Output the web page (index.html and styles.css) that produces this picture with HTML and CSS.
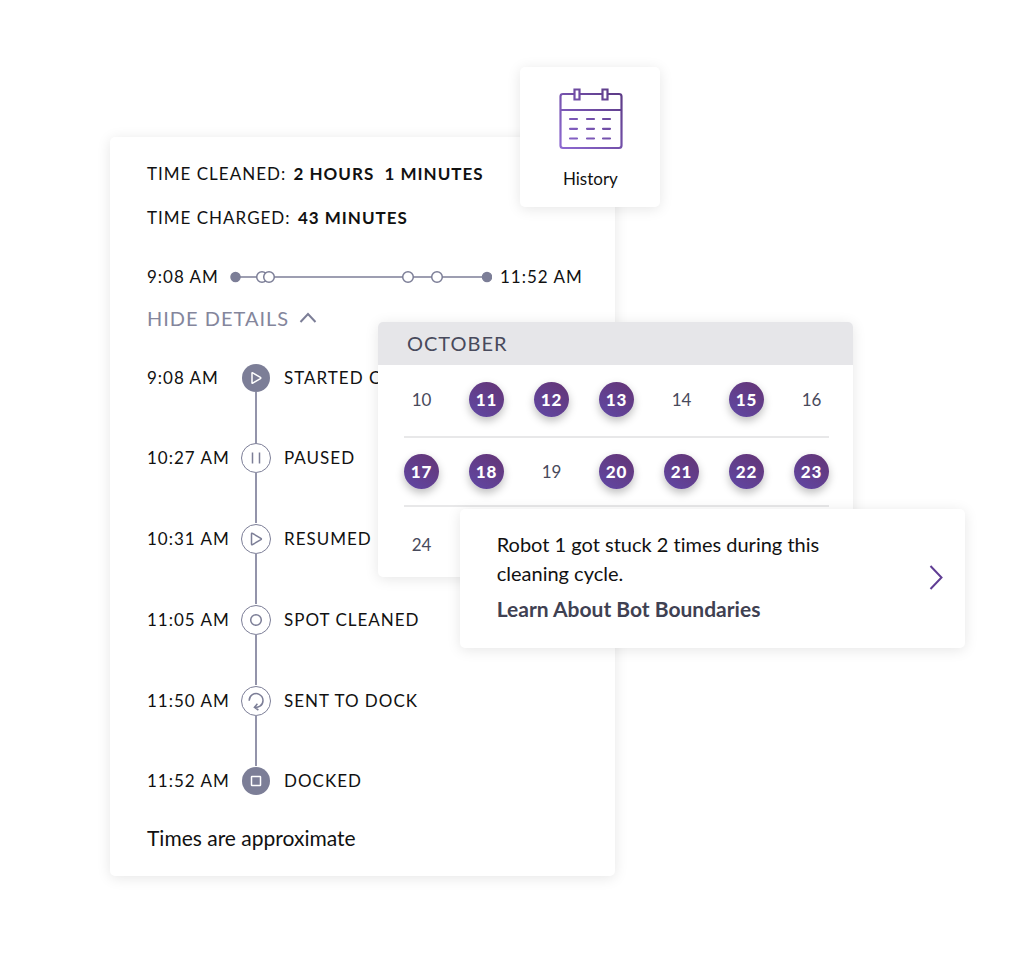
FILE: index.html
```html
<!DOCTYPE html>
<html lang="en">

<head>
    <meta charset="UTF-8">
    <meta name="viewport" content="width=device-width, initial-scale=1.0">
    <title>Cleaning History</title>
    <link rel="stylesheet" href="styles.css">
</head>

<body>
    <main class="scene">
        <section class="card details">
            <p class="stat">TIME CLEANED: <b>2 HOURS&nbsp; 1 MINUTES</b></p>
            <p class="stat">TIME CHARGED: <b>43 MINUTES</b></p>
            <div class="summary">
                <span class="summary-start">9:08 AM</span>
                <svg class="summary-line" width="262" height="14" viewBox="0 0 262 14" aria-hidden="true">
                    <path d="M6 7H257" />
                    <circle class="dot-full" cx="5.500" cy="7" r="4.500" />
                    <circle cx="32" cy="7" r="5.3" />
                    <circle cx="39" cy="7" r="5.3" />
                    <circle cx="178" cy="7" r="5.3" />
                    <circle cx="207" cy="7" r="5.3" />
                    <circle class="dot-full" cx="257" cy="7" r="4.500" />
                </svg>
                <span>11:52 AM</span>
            </div>
            <button class="toggle" type="button">HIDE DETAILS
                <svg width="18" height="12" viewBox="0 0 18 12" aria-hidden="true">
                    <path d="M1.5 10L9 2L16.5 10" />
                </svg>
            </button>
            <ul class="steps">
                <li class="step">
                    <span class="step-time">9:08 AM</span>
                    <span class="marker marker-full">
                        <svg width="28" height="28" viewBox="0 0 28 28" aria-hidden="true">
                            <path d="M10 9.300V18.700Q10 19.600 10.800 19.100L18.400 14.600Q19.200 14 18.400 13.400L10.800 8.900Q10 8.400 10 9.300Z" />
                        </svg>
                    </span>
                    <span>STARTED CLEANING</span>
                </li>
                <li class="step">
                    <span class="step-time">10:27 AM</span>
                    <span class="marker">
                        <svg width="28" height="28" viewBox="0 0 28 28" aria-hidden="true">
                            <path d="M10.500 8.500V19.500M17.500 8.500V19.500" />
                        </svg>
                    </span>
                    <span>PAUSED</span>
                </li>
                <li class="step">
                    <span class="step-time">10:31 AM</span>
                    <span class="marker">
                        <svg width="28" height="28" viewBox="0 0 28 28" aria-hidden="true">
                            <path d="M9.500 9V19Q9.500 20.200 10.500 19.600L18.900 14.700Q19.900 14 18.900 13.300L10.500 8.400Q9.500 7.800 9.500 9Z" />
                        </svg>
                    </span>
                    <span>RESUMED</span>
                </li>
                <li class="step">
                    <span class="step-time">11:05 AM</span>
                    <span class="marker">
                        <svg width="28" height="28" viewBox="0 0 28 28" aria-hidden="true">
                            <circle cx="14" cy="14" r="5.3" />
                        </svg>
                    </span>
                    <span>SPOT CLEANED</span>
                </li>
                <li class="step">
                    <span class="step-time">11:50 AM</span>
                    <span class="marker">
                        <svg width="28" height="28" viewBox="0 0 28 28" aria-hidden="true">
                            <path d="M7.200 13.800A6.900 6.900 0 1 1 18 19.200Q16 20.600 12.800 20.400M15.400 16.800L12.400 20.400L16.400 23" />
                        </svg>
                    </span>
                    <span>SENT TO DOCK</span>
                </li>
                <li class="step">
                    <span class="step-time">11:52 AM</span>
                    <span class="marker marker-full">
                        <svg width="28" height="28" viewBox="0 0 28 28" aria-hidden="true">
                            <rect x="9.500" y="9.500" width="9" height="9" rx=".5" />
                        </svg>
                    </span>
                    <span>DOCKED</span>
                </li>
            </ul>
            <p class="note">Times are approximate</p>
        </section>

        <button class="card history" type="button">
            <svg width="66" height="62" viewBox="-2 0 66 62" aria-hidden="true">
                <defs>
                    <linearGradient id="purple" gradientUnits="userSpaceOnUse" x1="4" y1="60" x2="60" y2="4">
                        <stop offset="0" stop-color="#8c68d0" />
                        <stop offset="1" stop-color="#5c3a86" />
                    </linearGradient>
                </defs>
                <g fill="none" stroke="url(#purple)" stroke-width="2.2">
                    <path d="M15 6H4Q1.500 6 1.500 8.500V57.500Q1.500 60 4 60H60Q62.500 60 62.500 57.500V8.500Q62.500 6 60 6H49M21 6H43M1.500 22H62.500" />
                    <path d="M15.500 1.500H20.500V11.500H15.500ZM43.500 1.500H48.500V11.500H43.500Z" />
                    <path stroke-linecap="round" d="M11 31H18M28 31H35M44 31H51M11 40.800H18M28 40.800H35M44 40.800H51M11 50.500H18M28 50.500H35M44 50.500H51" />
                </g>
            </svg>
            <span>History</span>
        </button>

        <section class="card calendar">
            <h2 class="month">OCTOBER</h2>
            <div class="weeks">
                <div class="week">
                    <span class="day">10</span>
                    <button class="day cleaned" type="button">11</button>
                    <button class="day cleaned" type="button">12</button>
                    <button class="day cleaned" type="button">13</button>
                    <span class="day">14</span>
                    <button class="day cleaned" type="button">15</button>
                    <span class="day">16</span>
                </div>
                <div class="week">
                    <button class="day cleaned" type="button">17</button>
                    <button class="day cleaned" type="button">18</button>
                    <span class="day">19</span>
                    <button class="day cleaned" type="button">20</button>
                    <button class="day cleaned" type="button">21</button>
                    <button class="day cleaned" type="button">22</button>
                    <button class="day cleaned" type="button">23</button>
                </div>
                <div class="week">
                    <span class="day">24</span>
                </div>
            </div>
        </section>

        <section class="card notice">
            <div class="notice-text">
                <p>Robot 1 got stuck 2 times during this cleaning cycle.</p>
                <a href="#">Learn About Bot Boundaries</a>
            </div>
            <button class="notice-next" type="button" aria-label="Next">
                <svg width="14" height="26" viewBox="0 0 14 26" aria-hidden="true">
                    <path d="M1.500 2L12.500 13.500L1.500 25" />
                </svg>
            </button>
        </section>
    </main>
</body>

</html>
```

FILE: styles.css
```css
body {
    margin: 0;
    background-color: #fff;
    color: #111;
    font-family: Lato, "Open Sans", sans-serif;
    font-size: 17px;
    font-variant-ligatures: none;
    line-height: 24px;
}

p,
h2,
ul {
    margin: 0;
    padding: 0;
}

ul {
    list-style: none;
}

button {
    border: 0;
    padding: 0;
    background: none;
    color: inherit;
    font: inherit;
    cursor: pointer;
}

svg {
    display: block;
    fill: none;
}

.scene {
    position: relative;
    margin: 67px 59px 0 110px;
    padding: 70px 0 78px;
}

.card {
    box-sizing: border-box;
    background-color: #fff;
    border-radius: 5px;
    box-shadow: 0 2px 14px rgba(0, 0, 0, 0.1);
}

/* cleaning details */
.details {
    width: 59.1%;
    padding: 25px 32px 26px 37px;
    letter-spacing: 1px;
}

.stat {
    margin-bottom: 20px;
}

.stat b {
    margin-left: 2px;
}

.summary {
    display: flex;
    align-items: center;
    gap: 8px;
    padding-top: 15px;
    white-space: nowrap;
}

.summary-start {
    flex-shrink: 0;
    width: 75px;
}

.summary-line,
.marker svg {
    flex-shrink: 0;
    stroke: #7c7e97;
    stroke-width: 1.5;
}

.summary-line circle {
    fill: #fff;
}

.summary-line .dot-full {
    fill: #7c7e97;
}

.toggle {
    display: flex;
    align-items: center;
    gap: 10px;
    margin-top: 17px;
    color: #84869c;
    font-size: 20px;
    letter-spacing: 1px;
}

.toggle svg {
    stroke: #7c7e97;
    stroke-width: 2;
}

.steps {
    display: flex;
    flex-direction: column;
    gap: 51px;
    margin-top: 34px;
}

.step {
    display: flex;
    align-items: center;
    white-space: nowrap;
}

.step-time {
    width: 94px;
}

.marker {
    position: relative;
    margin-right: 13px;
    border: 1px solid #7c7e97;
    border-radius: 50%;
}

.marker-full {
    margin-left: 1px;
    margin-right: 14px;
    border: 0;
    background-color: #7c7e97;
}

.marker-full svg {
    stroke: #fff;
}

/* line down to the next step */
.step:not(:last-child) .marker::after {
    content: "";
    position: absolute;
    top: 100%;
    left: calc(50% - 1px);
    width: 2px;
    height: 51px;
    background-color: #9394aa;
}

.note {
    margin-top: 31px;
    font-size: 21px;
    letter-spacing: 0;
}

/* history tile */
.history {
    position: absolute;
    top: 0;
    left: 48%;
    display: flex;
    flex-direction: column;
    align-items: center;
    gap: 17px;
    width: 140px;
    height: 140px;
    padding-top: 21px;
}

/* calendar */
.calendar {
    position: absolute;
    top: 255px;
    left: 268px;
    right: 112px;
    color: #484a5c;
}

.month {
    padding: 9px 29px 10px;
    border-radius: 5px 5px 0 0;
    background-color: #e6e6e9;
    font-size: 20px;
    font-weight: 400;
    letter-spacing: 1px;
}

.weeks {
    padding: 0 24px 0 26px;
}

.week {
    display: flex;
    justify-content: space-between;
    padding: 16px 0;
    border-bottom: 2px solid #e8e8e9;
}

.week:first-child {
    padding: 17px 0 19px;
}

.week:last-child {
    padding: 20px 0 15px;
    border-bottom: 0;
}

.day {
    width: 35px;
    height: 35px;
    font-size: 17px;
    line-height: 35px;
    text-align: center;
}

.cleaned {
    border-radius: 50%;
    background: linear-gradient(35deg, #6048a5, #643474);
    box-shadow: 0 4px 8px rgba(0, 0, 0, 0.25);
    color: #fff;
    font-weight: 900;
    letter-spacing: 1px;
}

/* notice */
.notice {
    position: absolute;
    top: 442px;
    right: 0;
    display: flex;
    align-items: center;
    justify-content: space-between;
    width: 59.1%;
    padding: 21px 22px 25px 37px;
    font-size: 20px;
    line-height: 29px;
}

.notice-text {
    max-width: 350px;
}

.notice a {
    display: block;
    margin-top: 6px;
    color: #3f4152;
    font-size: 21px;
    font-weight: 700;
    text-decoration: none;
}

.notice-next svg {
    stroke: #603d94;
    stroke-width: 2;
}
```
